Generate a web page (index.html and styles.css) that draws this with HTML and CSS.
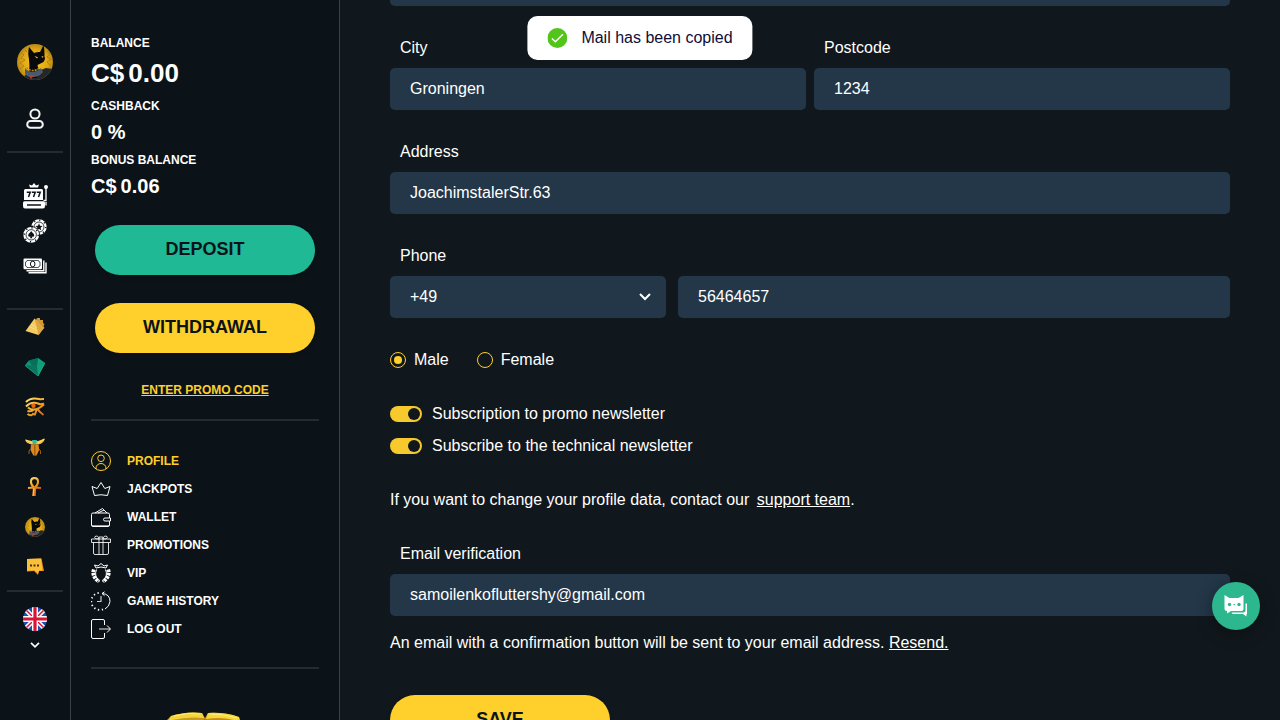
FILE: index.html
```html
<!DOCTYPE html>
<html lang="en">
<head>
<meta charset="utf-8">
<meta name="viewport" content="width=device-width, initial-scale=1">
<title>Profile</title>
<link rel="stylesheet" href="styles.css">
</head>
<body>
<svg class="defs" aria-hidden="true">
  <defs>
    <radialGradient id="gold-disc"><stop offset="0" stop-color="#f8c81e"/><stop offset="0.7" stop-color="#e0a814"/><stop offset="1" stop-color="#b98a16"/></radialGradient>
    <linearGradient id="gold" x1="0" y1="0" x2="1" y2="1"><stop offset="0" stop-color="#ffe77c"/><stop offset="0.5" stop-color="#f7ae25"/><stop offset="1" stop-color="#d95c12"/></linearGradient>
    <clipPath id="disc"><circle cx="18" cy="18" r="18"/></clipPath>
    <clipPath id="flag-disc"><circle cx="12" cy="12" r="12"/></clipPath>
    <symbol id="cat" viewBox="0 0 36 36">
      <g clip-path="url(#disc)">
        <rect width="36" height="36" fill="url(#gold-disc)"/>
        <path d="M4 9l3 2-3 3 4 2-5 3 4 3-4 3M30 7l3 3-3 3 4 2-4 3 4 4M8 6l2 2" stroke="#a87a18" stroke-width=".8" fill="none"/>
        <path d="M24 26l5-2 7 1v11H6l2-5z" fill="#24262a"/>
        <path d="M12 26c1-4 0-7 0-11-1-4-1-8 0-12l5 6c2-1 4-1 6-1l3.500-7c1 4 1 8 1 11l.5 3-1.500 3-4 2-2 1c0 3 2 5 4 6l-5 7H13z" fill="#08090c"/>
        <path d="M17.500 12l3.500 1.200-1 1.200zM24.500 12.500l2.200-.4-1.500 1.800z" fill="#f4c32b"/>
        <path d="M8 24c4 5 11 5 16 0l2 4c-4 6-14 7-18 2z" fill="#4a5a6c"/>
        <path d="M9.500 23.500c4 4 9 4 13.500 0" fill="none" stroke="#c18f24" stroke-width="1.500" stroke-dasharray="2 1"/>
        <path d="M8 29c5 4 12 4 17-1" fill="none" stroke="#8b5a3c" stroke-dasharray="1 1.500"/>
        <path d="M11.500 31l2.500 4 3-4z" fill="#c23a2e"/>
      </g>
    </symbol>
  </defs>
</svg>

<div class="app">
  <nav class="rail" aria-label="Sections">
    <a class="rail-avatar" href="#" aria-label="Home"><svg width="36" height="36"><use href="#cat"/></svg></a>
    <a class="rail-user" href="#" aria-label="Account">
      <svg width="22" height="22" viewBox="0 0 22 22" fill="none" stroke="#f2f3f3" stroke-width="2"><circle cx="11" cy="6" r="4.600"/><rect x="3.200" y="13" width="15.600" height="6.800" rx="3.400"/></svg>
    </a>
    <hr class="rail-line">
    <div class="rail-games">
      <a href="#" aria-label="Slots">
        <svg width="26" height="26" viewBox="0 0 26 26"><path fill="#fff" d="M8 4.500L7 1.500l3 1L12 0l2 2.500 3-1-1 3zM3.500 6h16q1.500 0 1.500 1.500V17H2V7.500Q2 6 3.500 6zM2.500 18.300h19q1.500 0 1.500 1.500V23q0 2.500-2 2.500H3Q1 25.500 1 23v-3.200q0-1.500 1.500-1.500z"/><circle cx="24" cy="4" r="2" fill="#fff"/><path d="M24 4v13.500h-2.500M24 19v3.500" fill="none" stroke="#fff" stroke-width="1.300"/><path d="M4.800 9.300h3.400L6.500 14M9.800 9.300h3.400L11.500 14M14.800 9.300h3.400L16.500 14M5 22h14" fill="none" stroke="#0c1318" stroke-width="1.500"/></svg>
      </a>
      <a href="#" aria-label="Live games">
        <svg width="24" height="24" viewBox="0 0 24 24"><g fill="#fff"><circle cx="16" cy="8" r="7.700"/><circle cx="16" cy="8" r="5" fill="none" stroke="#0c1318" stroke-width=".8"/><circle cx="16" cy="8" r="6.800" fill="none" stroke="#0c1318" stroke-width="1.500" stroke-dasharray="1.200 4.140"/><path fill="#0c1318" d="M16 4.300l1 2.500 2.700.2-2.100 1.700.7 2.600L16 9.900l-2.300 1.400.7-2.600L12.300 7l2.700-.2z"/><circle cx="8.200" cy="15.800" r="8.700" fill="#0c1318"/><circle cx="8.200" cy="15.800" r="7.900"/><circle cx="8.200" cy="15.800" r="5.200" fill="none" stroke="#0c1318" stroke-width=".8"/><circle cx="8.200" cy="15.800" r="7" fill="none" stroke="#0c1318" stroke-width="1.500" stroke-dasharray="1.200 4.300"/><path fill="#0c1318" d="M8.200 12c1 1.800 3.200 2.600 3 4.500-.2 1.300-1.500 1.600-2.400.9l.6 1.800H7l.6-1.800c-.9.700-2.200.4-2.400-.9-.2-1.900 2-2.700 3-4.500z"/></g></svg>
      </a>
      <a href="#" aria-label="Cash">
        <svg width="24" height="16" viewBox="0 0 24 16"><path d="M5.500 14.800h17.500V4.500M3.500 12.700h17.300V2.500" fill="none" stroke="#fff" stroke-width="1.400"/><rect x=".5" y=".5" width="18.500" height="10.800" rx="1" fill="#fff"/><path d="M4 2.500h11.500q0 1.500 1.500 1.500v4q-1.500 0-1.500 1.500H4Q4 8 2.500 8V4Q4 4 4 2.500z" fill="none" stroke="#0c1318" stroke-width=".7"/><ellipse cx="9.700" cy="6" rx="2.300" ry="2.800" fill="#fff" stroke="#0c1318"/></svg>
      </a>
    </div>
    <hr class="rail-line">
    <div class="rail-gems">
      <a href="#" aria-label="Pyramids"><svg width="20" height="20" viewBox="0 0 20 20"><path d="M12 1h3v2h3v3l1.500 1-1 2 1 2-6 4-6-5z" fill="#cf9938"/><path d="M9.500 1.500L.5 14l13 4 5-6.500z" fill="#f3cb60"/><path d="M9.500 1.500l4 16.500 5-6.500z" fill="#dfa63d"/><path d="M6 7l6 4M4 9.500l8.500 4" stroke="#fbe08c" stroke-width=".8"/></svg></a>
      <a href="#" aria-label="Emerald"><svg width="20" height="20" viewBox="0 0 20 20"><path d="M0 8.500L4 3.500l9-2.500 7 5-7 13z" fill="#08765e"/><path d="M0 8.500l4-5 3 5z" fill="#0d9472"/><path d="M13 1l7 5-8 2z" fill="#10a07c"/><path d="M4 3.500L13 1l-1 7-5 .5z" fill="#067059"/><path d="M12 8l8-2-7 13z" fill="#12a07c"/><path d="M0 8.500L13 19l7-13" stroke="#22b892" fill="none" stroke-width=".7"/></svg></a>
      <a href="#" aria-label="Eye of Horus"><svg width="20" height="20" viewBox="0 0 20 20" fill="none" stroke="url(#gold)" stroke-width="2"><path d="M1 5c4-4 9-4 13-3 2 .5 4 0 5 0M1 9.500c4-4 9-4 12-3 2 1 4 1 6 0M3 10.500c4 3.500 9 3 16-3M12 12l-2.500 6.500M12 11c1.500 3 3.500 5 6.500 7M9 12.500c-2 2-4 2-6.500 1.500M2.500 17c2.500 2 5.500 1.500 6-1"/><circle cx="8.500" cy="8.800" r="2.200" fill="#e56614" stroke="none"/></svg></a>
      <a href="#" aria-label="Scarab"><svg width="20" height="20" viewBox="0 0 20 20"><path d="M0 2.500l7 1.500h6l7-2.500c-1 4-4 5.500-7 6H7C4 7 1 6 0 2.500z" fill="#f6be35"/><path d="M1 3l6 3m12-4l-6 4" stroke="#ffe88a" stroke-width=".8"/><path d="M6 7.500h7.500l.7 5.500-2.700 5.500H8.300L5.500 13z" fill="#dd8a1c"/><path d="M5.500 12l-1.500 2v3M14 12l1.500 2v3" stroke="#a75b12" fill="none"/><path d="M7 3h5l-1 4H8z" fill="#31b9a7"/><path d="M9.800 8v10" stroke="#8d4b12"/></svg></a>
      <a href="#" aria-label="Ankh"><svg width="20" height="20" viewBox="0 0 20 20" fill="none" stroke="url(#gold)" stroke-width="2"><path d="M9.500 11C4.500 7 5 1 9.500 1s5 6 0 10zM3 11l6-.5 7 .5"/><path d="M9.500 10.500L9 19" stroke="#e8781c" stroke-width="3.300"/><path d="M9 11l-1 8" stroke="#ffd04f" stroke-width="1"/></svg></a>
      <a href="#" aria-label="Cat"><svg width="20" height="20"><use href="#cat"/></svg></a>
      <a href="#" aria-label="Messages"><svg width="20" height="20" viewBox="0 0 20 20"><path d="M2 2l14.500-.5L19 14h-5l-1 4-4-4-7 .5z" fill="#e9861e"/><path d="M2 2l14-.5 1.500 12H14l-1 3-3.500-3.300L2 14z" fill="#fbc03a"/><path d="M5 8.500h2m1.500 0h2m1.500 0h2" stroke="#4b320b" stroke-width="2"/></svg></a>
    </div>
    <hr class="rail-line">
    <button class="rail-lang" type="button" aria-label="Language: English">
      <svg width="24" height="24" viewBox="0 0 24 24"><g clip-path="url(#flag-disc)"><path fill="#1653b2" d="M0 0h24v24H0z"/><path d="M0 0l24 24M24 0L0 24" stroke="#fff" stroke-width="4.500"/><path d="M0 0l24 24M24 0L0 24" stroke="#d81437" stroke-width="1.500"/><path d="M12 0v24M0 12h24" stroke="#fff" stroke-width="6"/><path d="M12 0v24M0 12h24" stroke="#d81437" stroke-width="3.200"/></g></svg>
      <svg width="10" height="6" viewBox="0 0 10 6" fill="none" stroke="#fff" stroke-width="1.700"><path d="M1 .8l4 4 4-4"/></svg>
    </button>
  </nav>

  <aside class="panel">
    <dl class="balances">
      <dt>BALANCE</dt><dd class="main-balance"><span>C$</span><span>0.00</span></dd>
      <dt>CASHBACK</dt><dd>0 %</dd>
      <dt>BONUS BALANCE</dt><dd><span>C$</span><span>0.06</span></dd>
    </dl>
    <div class="actions">
      <button class="btn btn-green" type="button">DEPOSIT</button>
      <button class="btn" type="button">WITHDRAWAL</button>
      <a class="promo" href="#">ENTER PROMO CODE</a>
    </div>
    <hr class="panel-line">
    <nav class="menu" aria-label="Account menu">
      <a class="active" href="#"><svg viewBox="0 0 20 20"><circle cx="10" cy="10" r="9.500"/><circle cx="10" cy="7.300" r="3.300"/><path d="M5 18v-1a5 4.500 0 0 1 10 0v1"/></svg>PROFILE</a>
      <a href="#"><svg viewBox="0 0 20 20"><path d="M3.500 16.500L1 7.500l5.200 2L10 3.500l3.800 6 5.200-2-2.500 9q-6.500-1.500-13 0z" stroke-linejoin="round"/></svg>JACKPOTS</a>
      <a href="#"><svg viewBox="0 0 20 20"><path d="M2 6h15q1.500 0 1.500 1.500V11H14q-1.500 0-1.500 1.500T14 14h4.500v4q0 1.500-1.500 1.500H2Q.5 19.500.5 18V7.500Q.5 6 2 6zM4 6l7.500-4.500L13 3l3 3M7 6l6-3M18.500 11h1v3h-1"/><path d="M1 18.500h17" opacity=".6"/></svg>WALLET</a>
      <a href="#"><svg viewBox="0 0 20 20"><path d="M.5 4h19v3.500H.5zM2.500 7.500V18q0 1.500 1.500 1.500h12q1.500 0 1.500-1.500V7.500M8 4v15.500M12 4v15.500M8 4Q2.500 4 4 1.500q3.500-1.500 4 2.500zm4 0q5.500 0 4-2.500-3.500-1.500-4 2.500zM8 4V2h4v2" opacity=".85"/></svg>PROMOTIONS</a>
      <a href="#"><svg viewBox="0 0 20 20"><path d="M5 5L3.500 2 7 3l3-2.500L13 3l3.500-1L15 5q-5-2-10 0zM5.500 6.500q-3 7 3.500 12M14.500 6.500q3 7-3.500 12"/><path d="M2.800 6.500q-2.300 7 5.200 12M17.200 6.500q2.300 7-5.200 12" stroke-width="3.800" stroke-dasharray="2.600 .8"/></svg>VIP</a>
      <a href="#"><svg viewBox="0 0 20 20"><path d="M11 2.500q8 .5 8 8-.5 5-5 7.500M13.500.8L11 2.500l2.500 2.200"/><path d="M12 18.300A8.500 8.500 0 1 1 10 2" stroke-width="1.800" stroke-dasharray="1.300 2.600"/><path d="M10 5v5.500H6" stroke-width="1.200" opacity=".8"/></svg>GAME HISTORY</a>
      <a href="#"><svg viewBox="0 0 20 20"><path d="M13.500 6V2q0-1.500-1.500-1.500H2Q.5.500.5 2v16q0 1.500 1.500 1.500h10q1.500 0 1.500-1.500v-4M16 6.500l3.500 3.500-3.500 3.500"/><path d="M8 10h11" stroke-width="1.500" opacity=".6"/></svg>LOG OUT</a>
    </nav>
    <hr class="panel-line">
    <svg class="treasure" width="80" height="60" viewBox="0 0 80 60" aria-hidden="true"><path d="M0 9L5 4Q21-1 36 1l3 5-3 20H5z" fill="#c99a1e"/><path d="M5 4Q21-1 36 1l2 5Q20 4 2 9z" fill="#f3d43c"/><path d="M8 4q14-4 26-2" stroke="#ffee80" fill="none"/><path d="M39 6l3-5q17-1 31 4l2 5-3 18-33-3z" fill="#c98a18"/><path d="M42 1q16-1 31 4l1 5Q58 4 40 7z" fill="#f5d93a"/><path d="M44 2q14 0 27 4" stroke="#fff07c" fill="none"/></svg>
  </aside>

  <main class="content">
    <form class="profile">
      <input class="control" type="text" aria-label="Country" value="">
      <div class="pair">
        <div class="field"><label for="city">City</label><input class="control" id="city" type="text" value="Groningen"></div>
        <div class="field"><label for="postcode">Postcode</label><input class="control" id="postcode" type="text" value="1234"></div>
      </div>
      <div class="field"><label for="address">Address</label><input class="control" id="address" type="text" value="JoachimstalerStr.63"></div>
      <div class="field">
        <label for="phone">Phone</label>
        <div class="phone">
          <div class="select">
            <select class="control" aria-label="Country code"><option>+49</option></select>
            <svg width="12" height="8" viewBox="0 0 12 8" fill="none" stroke="#fff" stroke-width="2"><path d="M1 1l5 5 5-5"/></svg>
          </div>
          <input class="control" id="phone" type="tel" value="56464657">
        </div>
      </div>
      <div class="genders">
        <label class="choice"><input class="radio" type="radio" name="gender" checked>Male</label>
        <label class="choice"><input class="radio" type="radio" name="gender">Female</label>
      </div>
      <div class="toggles">
        <label class="toggle-row"><input class="toggle" type="checkbox" checked>Subscription to promo newsletter</label>
        <label class="toggle-row"><input class="toggle" type="checkbox" checked>Subscribe to the technical newsletter</label>
      </div>
      <p>If you want to change your profile data, contact our <a class="support" href="#">support team</a>.</p>
      <div class="field">
        <label for="email">Email verification</label>
        <input class="control" id="email" type="email" value="samoilenkofluttershy@gmail.com">
        <p class="hint">An email with a confirmation button will be sent to your email address. <a href="#">Resend.</a></p>
      </div>
      <button class="btn save" type="submit">SAVE</button>
    </form>
  </main>
</div>

<div class="toast" role="status">
  <svg width="20" height="20" viewBox="0 0 20 20"><circle cx="10" cy="10" r="10" fill="#52c41a"/><path d="M4.500 10.500l3.500 3.300 7.500-7.600" fill="none" stroke="#fff" stroke-width="1.500"/></svg>
  Mail has been copied
</div>
<button class="chat" type="button" aria-label="Chat">
  <svg width="24" height="24" viewBox="0 0 24 24"><path d="M21.500 9.500h1.500V20h-.5v2.500L19 20H9q-1-.3-1.500-1.500h12q2 0 2-2z" fill="#fff"/><path d="M.5 1l5 3h9l5-3v14q0 2-2 2H7l-4 2.500V17q-2.500 0-2.500-2z" fill="#fff"/><circle cx="5.500" cy="10.500" r="1.700" fill="#2db78f"/><circle cx="15" cy="10.500" r="1.700" fill="#2db78f"/><path d="M9 10h2.500l-1.200 1.500z" fill="#2db78f"/></svg>
</button>
</body>
</html>
```
FILE: styles.css
```css
* {
  box-sizing: border-box;
}

body {
  margin: 0;
  height: 100vh;
  overflow: hidden;
  background: #11181d;
  color: #fff;
  font: 16px/24px "Liberation Sans", Arial, sans-serif;
}

a {
  color: inherit;
}

button,
input,
select {
  font: inherit;
  color: inherit;
  margin: 0;
}

button {
  border: 0;
  padding: 0;
  cursor: pointer;
}

svg {
  display: block;
  flex: none;
}

hr {
  height: 2px;
  border: 0;
  background: #262b31;
}

.defs {
  position: absolute;
  width: 0;
  height: 0;
}

.app {
  display: flex;
  height: 100%;
}

/* Icon rail */
.rail {
  flex: none;
  width: 71px;
  padding: 44px 7px 0;
  background: #0c1318;
  border-right: 1px solid #3a4043;
  display: flex;
  flex-direction: column;
  align-items: center;
}

.rail-user {
  margin: 28px 0 21px;
}

.rail-line {
  flex: none;
  width: 100%;
  margin: 0;
}

.rail-games {
  margin: 25px 0;
}

.rail-games a {
  display: grid;
  place-items: center;
  height: 35px;
}

.rail-gems {
  display: grid;
  gap: 6px;
  margin-bottom: 6px;
}

.rail-gems a {
  display: grid;
  place-items: center;
  height: 34px;
}

.rail-lang {
  margin-top: 15px;
  background: none;
  display: grid;
  justify-items: center;
  gap: 11px;
}

/* Account panel */
.panel {
  flex: none;
  width: 269px;
  padding: 34px 20px 0;
  background: #0c1318;
  border-right: 1px solid #3a4043;
  overflow: hidden;
}

.balances {
  margin: 0 0 20px;
  font-weight: bold;
}

.balances dt {
  font-size: 12px;
  line-height: 18px;
}

.balances dd {
  display: flex;
  gap: 4px;
  margin: 0;
  padding-bottom: 2px;
  font-size: 20px;
  line-height: 34px;
}

.balances .main-balance {
  font-size: 26px;
  line-height: 43px;
}

.actions {
  display: flex;
  flex-direction: column;
  align-items: center;
  gap: 28px;
}

.btn {
  width: 220px;
  height: 50px;
  padding-bottom: 2px;
  border-radius: 25px;
  background: #ffcf2b;
  color: #0c1318;
  font-size: 18px;
  font-weight: bold;
  box-shadow: 0 2px 4px rgba(0, 0, 0, 0.25);
}

.btn-green {
  background: #1fb996;
}

.promo {
  color: #ffcf2b;
  font-size: 12px;
  font-weight: bold;
  line-height: 18px;
}

.panel-line {
  margin: 20px 0 26px;
}

.menu a {
  display: flex;
  align-items: center;
  gap: 16px;
  height: 28px;
  font-size: 12px;
  font-weight: bold;
  text-decoration: none;
}

.menu svg {
  width: 20px;
  height: 20px;
  fill: none;
  stroke: currentColor;
  stroke-width: 1;
}

.menu .active {
  color: #ffcf2b;
}

.menu + .panel-line {
  margin: 24px 0 43px;
}

.treasure {
  margin-left: 75px;
}

/* Profile form; the view is scrolled past the first field */
.content {
  flex: 1;
  min-width: 0;
  padding: 0 50px;
  overflow: hidden;
}

.profile {
  display: flex;
  flex-direction: column;
  gap: 30px;
  margin-top: -36px;
}

.profile p {
  margin: 0;
}

.pair {
  display: grid;
  grid-template-columns: 1fr 1fr;
  gap: 8px;
}

.field {
  display: grid;
  gap: 8px;
}

.field > label {
  padding-left: 10px;
}

.control {
  width: 100%;
  height: 42px;
  padding: 0 20px;
  border: 0;
  border-radius: 5px;
  background: #233748;
  appearance: none;
}

.phone {
  display: grid;
  grid-template-columns: 1fr 2fr;
  gap: 12px;
}

.select {
  display: grid;
  align-items: center;
}

.select > * {
  grid-area: 1 / 1;
}

.select svg {
  justify-self: end;
  margin-right: 15px;
  pointer-events: none;
}

.genders {
  display: flex;
  gap: 28px;
}

.choice {
  display: flex;
  align-items: center;
  gap: 8px;
}

.radio {
  appearance: none;
  width: 16px;
  height: 16px;
  border: 1px solid #ffcf2b;
  border-radius: 50%;
}

.radio:checked {
  padding: 3px;
  background: #ffcf2b content-box;
}

.toggles {
  display: grid;
  gap: 8px;
}

.toggle-row {
  display: flex;
  align-items: center;
  gap: 10px;
}

.toggle {
  appearance: none;
  width: 32px;
  height: 16px;
  border-radius: 8px;
  background: #f7c92d;
  padding: 2px;
  display: flex;
}

.toggle::before {
  content: "";
  width: 12px;
  height: 12px;
  border-radius: 50%;
  background: #11181d;
}

.toggle:checked {
  justify-content: flex-end;
}

.support {
  margin-left: 3px;
}

.profile .hint {
  margin-top: 7px;
}

.save {
  margin-top: 10px;
}

/* Overlays */
.toast {
  position: fixed;
  top: 16px;
  left: 50%;
  transform: translateX(-50%);
  display: flex;
  align-items: center;
  gap: 14px;
  height: 44px;
  padding: 0 20px;
  border-radius: 10px;
  background: #fff;
  color: #0d0d38;
  white-space: nowrap;
}

.chat {
  position: fixed;
  right: 20px;
  bottom: 90px;
  width: 48px;
  height: 48px;
  border-radius: 50%;
  background: #2db78f;
  box-shadow: 0 4px 16px rgba(0, 0, 0, 0.4);
  display: grid;
  place-items: center;
}
```
